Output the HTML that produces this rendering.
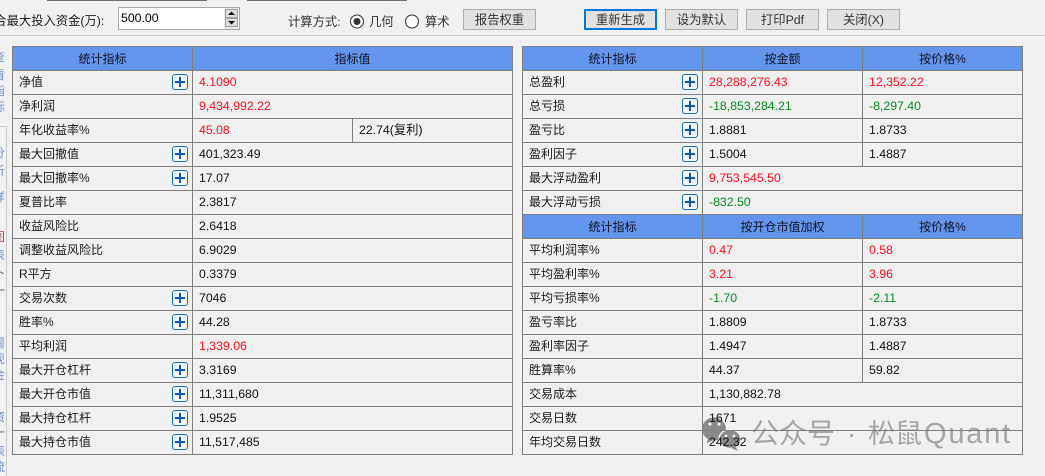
<!DOCTYPE html>
<html><head><meta charset="utf-8"><style>
html,body{margin:0;padding:0}
body{width:1045px;height:476px;overflow:hidden;position:relative;background:#f0f0f0;font:12.3px/24px "Liberation Sans","Noto Sans CJK SC",sans-serif;color:#111}
.a{position:absolute;white-space:nowrap}
table{position:absolute;top:46px;border-collapse:collapse;table-layout:fixed}
td{height:21px;padding:0 0 2px 6px;border:1px solid #808080;white-space:nowrap;position:relative;box-sizing:content-box;line-height:20px}
tr.h td{background:#6495ed;text-align:center;padding:0;height:23px;line-height:22px;color:#0c1220;font-size:12px}
td.l{color:#1a1a1a;font-size:12px}
.r{color:#fa0f1e}.g{color:#088a20}
.p{position:absolute;right:4px;top:3px;width:14px;height:14px;border:1px solid #1a6fc0;border-radius:3px;background:#f4f7fa}
.p:before{content:"";position:absolute;left:2px;right:2px;top:6px;height:2px;background:#0b5cad}
.p:after{content:"";position:absolute;top:2px;bottom:2px;left:6px;width:2px;background:#0b5cad}
.b{position:absolute;top:9px;width:71px;height:19px;border:1px solid #adadad;background:#e1e1e1;text-align:center;line-height:20px;color:#333}
.s{position:absolute;left:0;width:6px;overflow:hidden;height:14px;line-height:14px;font-size:12px}
.s span{position:absolute;left:-7px;top:0;color:#6f93d0}
</style></head><body>
<div class="a" style="left:47px;top:0;width:160px;height:1px;background:#6d6d6d"></div>
<div class="a" style="left:247px;top:0;width:160px;height:1px;background:#6d6d6d"></div>
<div class="a" style="left:0;top:35px;width:1045px;height:1px;background:#c8c8c8"></div>

<div class="a" style="left:-18px;top:9px;color:#222">组合最大投入资金(万):</div>
<div class="a" style="left:118px;top:7px;height:21px;border:1px solid #a8a8a8;background:#fff;line-height:20px;padding-left:2px;width:118px;color:#000">500.00</div>
<div class="a" style="left:224px;top:8px;width:14px;height:21px;background:#e8e8e8"></div>
<div class="a" style="left:225px;top:9px;background:#dcdcdc;border:1px solid #a0a0a0;box-sizing:border-box;width:13px;height:9px"></div>
<div class="a" style="left:225px;top:18px;background:#dcdcdc;border:1px solid #a0a0a0;box-sizing:border-box;width:13px;height:9px"></div>
<svg class="a" style="left:225px;top:9px" width="13" height="18"><path d="M6.500 2.500L10 6H3z M3 12h7l-3.500 3.500z" fill="#111"/></svg>

<div class="a" style="left:288px;top:10px;color:#333">计算方式:</div>
<svg class="a" style="left:349px;top:13px" width="80" height="17"><circle cx="8" cy="8.500" r="6.500" fill="#fff" stroke="#333"/><circle cx="8" cy="8.500" r="3.500" fill="#333"/><circle cx="63" cy="8.500" r="6.500" fill="#fff" stroke="#333"/></svg>
<div class="a" style="left:369px;top:10px;color:#333">几何</div>
<div class="a" style="left:425px;top:10px;color:#333">算术</div>

<div class="b" style="left:463px">报告权重</div>
<div class="b" style="left:584px;border:2px solid #0078d7;width:69px;height:17px;line-height:18px">重新生成</div>
<div class="b" style="left:665px">设为默认</div>
<div class="b" style="left:746px">打印Pdf</div>
<div class="b" style="left:827px">关闭(X)</div>

<div class="a" style="left:0;top:126px;width:6px;height:1px;background:#c8c8c8"></div>
<div class="a" style="left:6px;top:126px;width:1px;height:350px;background:#c8c8c8"></div>
<div class="s" style="top:50px"><span>查</span></div>
<div class="s" style="top:68px"><span>看</span></div>
<div class="s" style="top:84px"><span>指</span></div>
<div class="s" style="top:100px"><span>标</span></div>
<div class="s" style="top:146px"><span>分</span></div>
<div class="s" style="top:164px"><span>析</span></div>
<div class="s" style="top:190px"><span>详</span></div>
<div class="s" style="top:230px"><span style="color:#b04a4a">图</span></div>
<div class="s" style="top:248px"><span>表</span></div>
<div class="s" style="top:266px"><span style="color:#555">卜</span></div>
<div class="s" style="top:284px"><span style="color:#555">十</span></div>
<div class="s" style="top:336px"><span>周</span></div>
<div class="s" style="top:352px"><span>现</span></div>
<div class="s" style="top:368px"><span>金</span></div>
<div class="s" style="top:410px"><span>资</span></div>
<div class="s" style="top:426px"><span style="color:#555">十</span></div>
<div class="s" style="top:444px"><span>表</span></div>
<div class="s" style="top:460px"><span>流</span></div>

<svg class="a" style="left:702px;top:414px" width="42" height="40"><ellipse cx="12" cy="15" rx="12" ry="11.500" fill="#8a8a8a"/><path d="M6 24l-1 5 7-3z" fill="#8a8a8a"/><ellipse cx="28" cy="25" rx="11" ry="9.500" fill="#8a8a8a" stroke="#f0f0f0" stroke-width="1.500"/><path d="M33 32l3 5-7-3z" fill="#8a8a8a"/><circle cx="8" cy="10" r="1.600" fill="#f0f0f0"/><circle cx="17" cy="10" r="1.600" fill="#f0f0f0"/><circle cx="24" cy="22" r="1.400" fill="#f0f0f0"/><circle cx="32" cy="22" r="1.400" fill="#f0f0f0"/></svg>
<div class="a" style="left:751px;top:414px;font-size:28px;line-height:40px;color:rgba(120,120,120,.62)">公众号</div>
<div class="a" style="left:847px;top:414px;font-size:28px;line-height:40px;color:rgba(120,120,120,.62)">·</div>
<div class="a" style="left:868px;top:414px;font-size:27px;line-height:40px;color:rgba(120,120,120,.62)">松鼠</div>
<div class="a" style="left:924px;top:414px;font-size:29px;line-height:40px;letter-spacing:1.800px;color:rgba(120,120,120,.62)">Quant</div>

<table style="left:12px;width:501px">
<colgroup><col style="width:180px"><col style="width:160px"><col style="width:160px"></colgroup>
<tr class="h"><td>统计指标</td><td colspan="2">指标值</td></tr>
<tr><td class="l">净值<i class="p"></i></td><td colspan="2" class="r">4.1090</td></tr>
<tr><td class="l">净利润</td><td colspan="2" class="r">9,434,992.22</td></tr>
<tr><td class="l">年化收益率%</td><td class="r">45.08</td><td>22.74(复利)</td></tr>
<tr><td class="l">最大回撤值<i class="p"></i></td><td colspan="2">401,323.49</td></tr>
<tr><td class="l">最大回撤率%<i class="p"></i></td><td colspan="2">17.07</td></tr>
<tr><td class="l">夏普比率</td><td colspan="2">2.3817</td></tr>
<tr><td class="l">收益风险比</td><td colspan="2">2.6418</td></tr>
<tr><td class="l">调整收益风险比</td><td colspan="2">6.9029</td></tr>
<tr><td class="l">R平方</td><td colspan="2">0.3379</td></tr>
<tr><td class="l">交易次数<i class="p"></i></td><td colspan="2">7046</td></tr>
<tr><td class="l">胜率%<i class="p"></i></td><td colspan="2">44.28</td></tr>
<tr><td class="l">平均利润</td><td colspan="2" class="r">1,339.06</td></tr>
<tr><td class="l">最大开仓杠杆<i class="p"></i></td><td colspan="2">3.3169</td></tr>
<tr><td class="l">最大开仓市值<i class="p"></i></td><td colspan="2">11,311,680</td></tr>
<tr><td class="l">最大持仓杠杆<i class="p"></i></td><td colspan="2">1.9525</td></tr>
<tr><td class="l">最大持仓市值<i class="p"></i></td><td colspan="2">11,517,485</td></tr>
</table>

<table style="left:522px;width:501px">
<colgroup><col style="width:180px"><col style="width:160px"><col style="width:160px"></colgroup>
<tr class="h"><td>统计指标</td><td>按金额</td><td>按价格%</td></tr>
<tr><td class="l">总盈利<i class="p"></i></td><td class="r">28,288,276.43</td><td class="r">12,352.22</td></tr>
<tr><td class="l">总亏损<i class="p"></i></td><td class="g">-18,853,284.21</td><td class="g">-8,297.40</td></tr>
<tr><td class="l">盈亏比<i class="p"></i></td><td>1.8881</td><td>1.8733</td></tr>
<tr><td class="l">盈利因子<i class="p"></i></td><td>1.5004</td><td>1.4887</td></tr>
<tr><td class="l">最大浮动盈利<i class="p"></i></td><td colspan="2" class="r">9,753,545.50</td></tr>
<tr><td class="l">最大浮动亏损<i class="p"></i></td><td colspan="2" class="g">-832.50</td></tr>
<tr class="h"><td>统计指标</td><td>按开仓市值加权</td><td>按价格%</td></tr>
<tr><td class="l">平均利润率%</td><td class="r">0.47</td><td class="r">0.58</td></tr>
<tr><td class="l">平均盈利率%</td><td class="r">3.21</td><td class="r">3.96</td></tr>
<tr><td class="l">平均亏损率%</td><td class="g">-1.70</td><td class="g">-2.11</td></tr>
<tr><td class="l">盈亏率比</td><td>1.8809</td><td>1.8733</td></tr>
<tr><td class="l">盈利率因子</td><td>1.4947</td><td>1.4887</td></tr>
<tr><td class="l">胜算率%</td><td>44.37</td><td>59.82</td></tr>
<tr><td class="l">交易成本</td><td colspan="2">1,130,882.78</td></tr>
<tr><td class="l">交易日数</td><td colspan="2">1671</td></tr>
<tr><td class="l">年均交易日数</td><td colspan="2">242.32</td></tr>
</table>
</body></html>
